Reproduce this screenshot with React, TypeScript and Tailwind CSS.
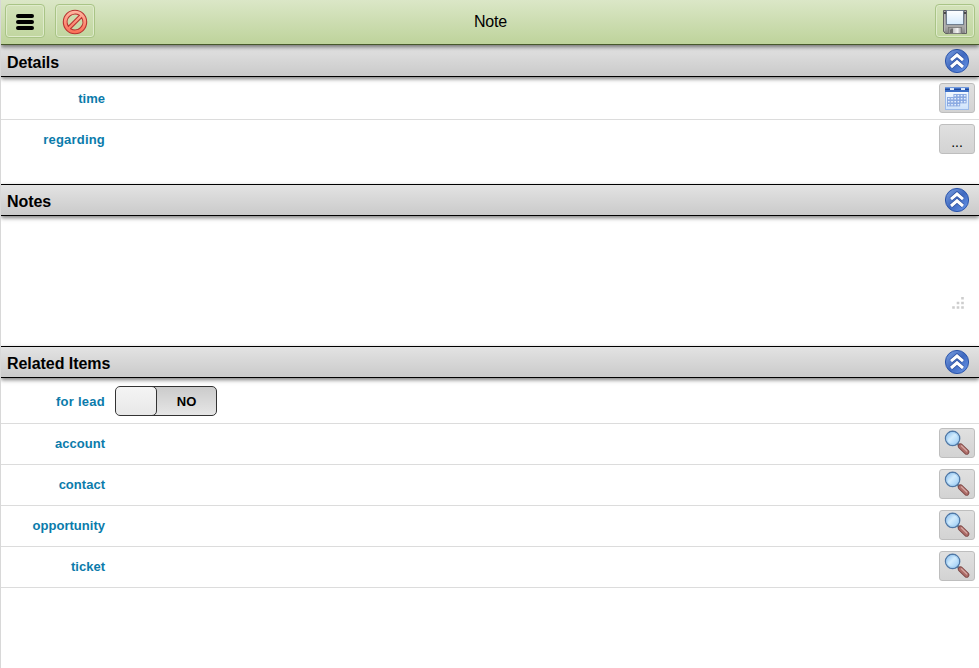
import React from "react";

function Chevron() {
  return (
    <svg width="26" height="26" viewBox="0 0 26 26" className="shrink-0">
      <defs>
        <linearGradient id="blue" x1="0" y1="0" x2="1" y2="1">
          <stop offset="0" stopColor="#7fa3e2" />
          <stop offset="0.5" stopColor="#3f69c0" />
          <stop offset="1" stopColor="#6c9aec" />
        </linearGradient>
      </defs>
      <circle cx="13" cy="13" r="11.6" fill="url(#blue)" stroke="#2c55aa" strokeWidth="1" />
      <path d="M7 12.2 L13 7 L19 12.2 M7 19 L13 13.8 L19 19" fill="none" stroke="#2c4f9e" strokeWidth="4.4" />
      <path d="M7 12.2 L13 7 L19 12.2 M7 19 L13 13.8 L19 19" fill="none" stroke="#fff" strokeWidth="3" />
    </svg>
  );
}

function Magnifier() {
  return (
    <svg width="28" height="28" viewBox="0 0 28 28">
      <defs>
        <linearGradient id="lens" x1="0" y1="0" x2="1" y2="1">
          <stop offset="0" stopColor="#7db5ec" />
          <stop offset="0.45" stopColor="#d3ecfd" />
          <stop offset="1" stopColor="#93c8f5" />
        </linearGradient>
      </defs>
      <path d="M14 14 L17 17" stroke="#777d86" strokeWidth="2.6" />
      <path d="M17.6 17.2 L23.6 23" stroke="#7d4745" strokeWidth="5.4" strokeLinecap="round" />
      <path d="M17.6 17.2 L23.6 23" stroke="#ae6d69" strokeWidth="3.8" strokeLinecap="round" />
      <path d="M18.3 16.8 L23.8 22" stroke="#d6aaa5" strokeWidth="1.2" strokeLinecap="round" />
      <circle cx="9.6" cy="9.4" r="7.1" fill="url(#lens)" stroke="#5078a6" strokeWidth="1.4" />
      <circle cx="9.6" cy="9.4" r="5.9" fill="none" stroke="#a6d2f5" strokeWidth="1" />
    </svg>
  );
}

function CalendarIcon() {
  const dots: [number, number][] = [];
  for (let r = 0; r < 4; r++) {
    for (let c = 0; c < 6; c++) {
      if ((r === 0 && c < 2) || (r === 3 && c > 3)) continue;
      dots.push([c, r]);
    }
  }
  return (
    <svg width="24" height="24" viewBox="0 0 24 24">
      <defs>
        <linearGradient id="page" x1="0" y1="0" x2="0" y2="1">
          <stop offset="0" stopColor="#fafdff" />
          <stop offset="1" stopColor="#cfe3fb" />
        </linearGradient>
      </defs>
      <rect x="0.5" y="1.5" width="23" height="22" fill="url(#page)" stroke="#9cbbea" />
      <rect x="0" y="1" width="24" height="5" fill="#3d6fc6" />
      <rect x="0" y="1" width="24" height="1" fill="#6f97dc" />
      <rect x="0" y="3" width="24" height="1" fill="#1f489c" />
      <rect x="5" y="2" width="4" height="2" fill="#dce9fb" />
      <rect x="16" y="2" width="4" height="2" fill="#dce9fb" />
      {dots.map(([c, r]) => (
        <rect key={`${c}-${r}`} x={2.5 + c * 3.2} y={8.5 + r * 3} width="2.6" height="2.4" fill="#e6f0fd" stroke="#86a6e0" strokeWidth="0.9" />
      ))}
    </svg>
  );
}

function Floppy() {
  return (
    <svg width="24" height="24" viewBox="0 0 24 24">
      <defs>
        <linearGradient id="metal" x1="0" y1="0" x2="0" y2="1">
          <stop offset="0" stopColor="#8a8a8a" />
          <stop offset="0.7" stopColor="#a9a9a9" />
          <stop offset="1" stopColor="#858585" />
        </linearGradient>
        <linearGradient id="label" x1="0" y1="0" x2="0" y2="1">
          <stop offset="0" stopColor="#fff" />
          <stop offset="1" stopColor="#d5ebfd" />
        </linearGradient>
        <linearGradient id="shutter" x1="0" y1="0" x2="1" y2="0">
          <stop offset="0" stopColor="#8d8d8d" />
          <stop offset="0.5" stopColor="#d9d9d9" />
          <stop offset="0.7" stopColor="#f2f2f2" />
          <stop offset="1" stopColor="#909090" />
        </linearGradient>
      </defs>
      <path d="M0.5 0.5 H23.5 V23.5 H2.5 L0.5 21.5 Z" fill="url(#metal)" stroke="#626262" />
      <path d="M1.5 1 V21 M22.5 1 V23" stroke="#b5b5b5" />
      <rect x="3.5" y="0.5" width="17" height="14" fill="url(#label)" stroke="#6f7d8e" />
      <rect x="5.5" y="17.5" width="13" height="6" fill="url(#shutter)" stroke="#777" strokeWidth="0.8" />
      <path d="M7 23 V20 L8.500 18.500 H10 V23 Z" fill="#6b6b6b" />
      <rect x="1" y="2" width="2" height="2" fill="#4a4a4a" />
      <rect x="21" y="2" width="2" height="2" fill="#4a4a4a" />
    </svg>
  );
}

function ProhibitIcon() {
  return (
    <svg width="26" height="26" viewBox="0 0 26 26">
      <defs>
        <linearGradient id="red" x1="0" y1="0" x2="0" y2="1">
          <stop offset="0" stopColor="#ffb8a2" />
          <stop offset="1" stopColor="#fb6d54" />
        </linearGradient>
      </defs>
      <path
        fillRule="evenodd"
        d="M13 1.3 A11.7 11.7 0 1 0 13 24.7 A11.7 11.7 0 1 0 13 1.3 Z M6.3 17.3 A8 8 0 0 1 17.3 6.3 Z M8.7 19.7 A8 8 0 0 0 19.7 8.7 Z"
        fill="url(#red)"
        stroke="#b83230"
        strokeWidth="1.1"
      />
    </svg>
  );
}

function HeaderButton({ children }: { children: React.ReactNode }) {
  return (
    <button className="flex h-[34px] w-10 items-center justify-center rounded-[4px] border border-[#a9c486] bg-gradient-to-b from-[#d3e2b9] to-[#c1d6a0] pt-[2px] shadow-[inset_0_0_0_1px_#dfebcc]">
      {children}
    </button>
  );
}

function FieldButton({ children }: { children: React.ReactNode }) {
  return (
    <button className="flex h-[30px] w-9 items-center justify-center rounded-[3px] border border-[#bebebe] bg-gradient-to-b from-[#e0e0e0] to-[#d3d3d3]">
      {children}
    </button>
  );
}

function SectionBar({ title, first }: { title: string; first?: boolean }) {
  return (
    <div
      className={`relative flex h-8 items-center justify-between border-b border-black bg-gradient-to-b from-[#e3e3e3] to-[#cacaca] pr-[9px] pl-[6px] shadow-[0_2px_4px_rgba(0,0,0,0.5)] ${first ? "pt-px" : "border-t"}`}
    >
      <h2 className="pt-[3px] text-[16px] leading-5 font-bold tracking-[-0.06px] text-black">{title}</h2>
      <Chevron />
    </div>
  );
}

function Row({ label, children, last }: { label: string; children?: React.ReactNode; last?: boolean }) {
  return (
    <div className={`flex h-[41px] items-start justify-between pt-1 pr-1 ${last ? "" : "border-b border-[#dcdcdc]"}`}>
      <span className={`w-[104px] pt-[8px] text-right text-[13px] leading-4 font-bold text-[#0b7bab] ${last ? "tracking-[0.2px]" : "tracking-[0.02px]"}`}>
        {label}
      </span>
      {children}
    </div>
  );
}

export default function App() {
  return (
    <div className="h-[668px] w-[979px] overflow-hidden border-l border-[#d8d8d8] bg-white font-['Liberation_Sans',Arial,sans-serif]">
      <header className="relative z-10 flex h-[45px] items-center justify-between border-b border-[#46582a] bg-gradient-to-b from-[#dbe7c7] to-[#bed39b] pr-1 pb-[2px] pl-1 shadow-[0_2px_4px_rgba(0,0,0,0.5)]">
        <div className="flex w-[90px] gap-[10px]">
          <HeaderButton>
            <svg width="18" height="16" viewBox="0 0 18 16">
              <path d="M2 2 H16 M2 8 H16 M2 14 H16" stroke="#000" strokeWidth="4" strokeLinecap="round" />
            </svg>
          </HeaderButton>
          <HeaderButton>
            <ProhibitIcon />
          </HeaderButton>
        </div>
        <h1 className="pt-[2px] pl-px text-[16px] leading-5 tracking-[-0.15px] text-black">Note</h1>
        <div className="flex w-[90px] justify-end">
          <HeaderButton>
            <Floppy />
          </HeaderButton>
        </div>
      </header>

      <SectionBar title="Details" first />
      <div className="h-[107px] pt-[2px]">
        <Row label="time">
          <FieldButton>
            <CalendarIcon />
          </FieldButton>
        </Row>
        <Row label="regarding" last>
          <FieldButton>
            <span className="pt-[6px] text-[14px] leading-4 font-normal text-black">...</span>
          </FieldButton>
        </Row>
      </div>

      <SectionBar title="Notes" />
      <div className="flex h-[130px] items-end justify-end pr-[14px] pb-[36px]">
        <svg width="13" height="13" viewBox="0 0 13 13" fill="#cdcdcd">
          <path d="M9.200 0h2.600v2.600h-2.600z M4.700 4.700h2.600v2.600h-2.600z M9.200 4.700h2.600v2.600h-2.600z M0.200 9.200h2.600v2.600h-2.600z M4.700 9.200h2.600v2.600h-2.600z M9.200 9.200h2.600v2.600h-2.600z" />
        </svg>
      </div>

      <SectionBar title="Related Items" />
      <div>
        <div className="flex h-[46px] items-start border-b border-[#dcdcdc] pt-2">
          <span className="w-[104px] pt-[8px] text-right text-[13px] leading-4 font-bold tracking-[0.25px] text-[#0b7bab]">for lead</span>
          <div className="ml-[10px] flex h-[30px] w-[102px] overflow-hidden rounded-[5px] border border-[#333] bg-gradient-to-b from-[#cbcbcb] to-[#e6e6e6]">
            <div className="-my-px -ml-px h-[30px] w-[42px] rounded-[5px] border border-[#333] bg-gradient-to-b from-[#f4f4f4] to-[#e8e8e8]" />
            <span className="flex-1 pt-[7px] text-center text-[13px] leading-4 font-bold text-black">NO</span>
          </div>
        </div>
        {["account", "contact", "opportunity", "ticket"].map((label) => (
          <Row key={label} label={label}>
            <FieldButton>
              <Magnifier />
            </FieldButton>
          </Row>
        ))}
      </div>
    </div>
  );
}
